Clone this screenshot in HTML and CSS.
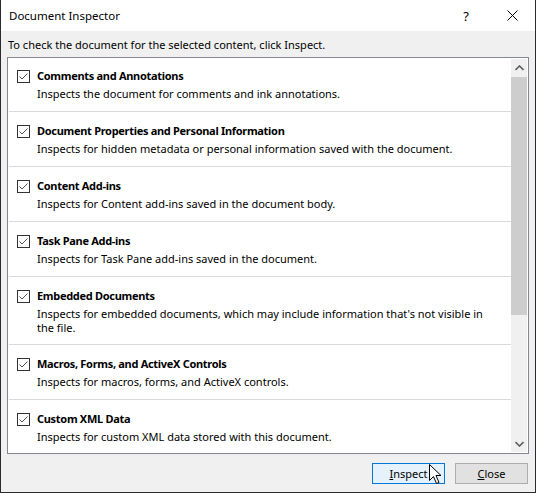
FILE: index.html
```html
<!DOCTYPE html>
<html>
<head>
<meta charset="utf-8">
<link rel="stylesheet" href="styles.css">
</head>
<body>
<div class="window">
  <div class="titlebar">
    <div class="title">Document Inspector</div>
    <div class="tb-btn help">?</div>
    <div class="tb-btn close">
      <svg width="11" height="11" viewBox="0 0 11 11"><path d="M0.5 0.5 L10.5 10.5 M10.5 0.5 L0.5 10.5" stroke="#000" stroke-width="1" fill="none"/></svg>
    </div>
  </div>
  <div class="content">
    <div class="intro">To check the document for the selected content, click Inspect.</div>
    <div class="listbox">
      <div class="items">
        <div class="item">
          <div class="item-head"><span class="check"><svg width="13" height="13" viewBox="0 0 13 13"><rect x="0.5" y="0.5" width="12" height="12" fill="#fff" stroke="#333"/><path d="M2.5 6.5 L5 9 L10.5 3.5" stroke="#555" stroke-width="1" fill="none"/></svg></span><span class="item-title">Comments and Annotations</span></div>
          <div class="item-desc">Inspects the document for comments and ink annotations.</div>
        </div>
        <div class="item">
          <div class="item-head"><span class="check"><svg width="13" height="13" viewBox="0 0 13 13"><rect x="0.5" y="0.5" width="12" height="12" fill="#fff" stroke="#333"/><path d="M2.5 6.5 L5 9 L10.5 3.5" stroke="#555" stroke-width="1" fill="none"/></svg></span><span class="item-title">Document Properties and Personal Information</span></div>
          <div class="item-desc">Inspects for hidden metadata or personal information saved with the document.</div>
        </div>
        <div class="item">
          <div class="item-head"><span class="check"><svg width="13" height="13" viewBox="0 0 13 13"><rect x="0.5" y="0.5" width="12" height="12" fill="#fff" stroke="#333"/><path d="M2.5 6.5 L5 9 L10.5 3.5" stroke="#555" stroke-width="1" fill="none"/></svg></span><span class="item-title">Content Add-ins</span></div>
          <div class="item-desc">Inspects for Content add-ins saved in the document body.</div>
        </div>
        <div class="item">
          <div class="item-head"><span class="check"><svg width="13" height="13" viewBox="0 0 13 13"><rect x="0.5" y="0.5" width="12" height="12" fill="#fff" stroke="#333"/><path d="M2.5 6.5 L5 9 L10.5 3.5" stroke="#555" stroke-width="1" fill="none"/></svg></span><span class="item-title">Task Pane Add-ins</span></div>
          <div class="item-desc">Inspects for Task Pane add-ins saved in the document.</div>
        </div>
        <div class="item">
          <div class="item-head"><span class="check"><svg width="13" height="13" viewBox="0 0 13 13"><rect x="0.5" y="0.5" width="12" height="12" fill="#fff" stroke="#333"/><path d="M2.5 6.5 L5 9 L10.5 3.5" stroke="#555" stroke-width="1" fill="none"/></svg></span><span class="item-title">Embedded Documents</span></div>
          <div class="item-desc multi">Inspects for embedded documents, which may include information that's not visible in<br>the file.</div>
        </div>
        <div class="item">
          <div class="item-head"><span class="check"><svg width="13" height="13" viewBox="0 0 13 13"><rect x="0.5" y="0.5" width="12" height="12" fill="#fff" stroke="#333"/><path d="M2.5 6.5 L5 9 L10.5 3.5" stroke="#555" stroke-width="1" fill="none"/></svg></span><span class="item-title">Macros, Forms, and ActiveX Controls</span></div>
          <div class="item-desc">Inspects for macros, forms, and ActiveX controls.</div>
        </div>
        <div class="item">
          <div class="item-head"><span class="check"><svg width="13" height="13" viewBox="0 0 13 13"><rect x="0.5" y="0.5" width="12" height="12" fill="#fff" stroke="#333"/><path d="M2.5 6.5 L5 9 L10.5 3.5" stroke="#555" stroke-width="1" fill="none"/></svg></span><span class="item-title">Custom XML Data</span></div>
          <div class="item-desc">Inspects for custom XML data stored with this document.</div>
        </div>
      </div>
      <div class="scrollbar">
        <div class="sb-arrow"><svg width="9" height="6" viewBox="0 0 9 6"><path d="M0.5 5 L4.5 1 L8.5 5" stroke="#606060" stroke-width="1.6" fill="none"/></svg></div>
        <div class="sb-track"><div class="sb-thumb"></div></div>
        <div class="sb-arrow"><svg width="9" height="6" viewBox="0 0 9 6"><path d="M0.5 1 L4.5 5 L8.5 1" stroke="#606060" stroke-width="1.6" fill="none"/></svg></div>
      </div>
    </div>
    <div class="buttons">
      <div class="btn default"><span class="ak">I</span>nspect
        <svg class="cursor" width="14" height="22" viewBox="0 0 14 22"><path d="M0.5 0.5 L0.5 16.5 L4.5 12.5 L7.5 19.5 L10 18.5 L7 11.5 L12 11.5 Z" fill="#fff" stroke="#000" stroke-width="1"/></svg>
      </div>
      <div class="btn"><span class="ak">C</span>lose</div>
    </div>
  </div>
</div>
</body>
</html>
```

FILE: styles.css
```css
html, body {
  margin: 0;
  padding: 0;
}
body {
  width: 536px;
  height: 493px;
  overflow: hidden;
  font-family: "Noto Sans", "Open Sans", sans-serif;
  font-size: 11px;
  color: #000;
}
.window {
  box-sizing: border-box;
  width: 536px;
  height: 493px;
  border-left: 1px solid #2b2b2b;
  border-right: 1px solid #2b2b2b;
  border-bottom: 1px solid #2b2b2b;
  background: #f0f0f0;
  display: flex;
  flex-direction: column;
}
.titlebar {
  height: 31px;
  background: #fff;
  display: flex;
  align-items: center;
  flex-shrink: 0;
}
.title {
  flex: 1;
  padding-left: 8px;
  line-height: 16px;
  font-size: 11.5px;
}
.tb-btn {
  width: 46px;
  height: 31px;
  display: flex;
  align-items: center;
  justify-content: center;
}
.help {
  font-size: 13px;
}
.content {
  flex: 1;
  display: flex;
  flex-direction: column;
  padding: 6px 6px 0 6px;
}
.intro {
  line-height: 16px;
  padding-left: 1px;
  margin-bottom: 4px;
}
.listbox {
  height: 397px;
  box-sizing: border-box;
  border: 1px solid #828790;
  background: #fff;
  display: flex;
}
.items {
  flex: 1;
  padding-left: 1px;
}
.item {
  padding: 11px 0 10px 0;
  border-bottom: 1px solid #dadada;
}
.item:first-child {
  padding-top: 10px;
}
.item:last-child {
  border-bottom: none;
}
.item-head {
  display: flex;
  align-items: center;
  height: 16px;
}
.check {
  width: 13px;
  height: 13px;
  margin-left: 8px;
  margin-right: 7px;
  display: flex;
}
.item-title {
  font-weight: bold;
  line-height: 16px;
  letter-spacing: -0.3px;
}
.item-desc {
  margin-top: 3px;
  padding-left: 28px;
  line-height: 14px;
}
.item-desc.multi {
  line-height: 13.5px;
}
.scrollbar {
  width: 16px;
  margin: 1px 1px 1px 0;
  background: #f0f0f0;
  display: flex;
  flex-direction: column;
}
.sb-arrow {
  height: 17px;
  display: flex;
  align-items: center;
  justify-content: center;
}
.sb-track {
  flex: 1;
  padding-top: 1px;
}
.sb-thumb {
  height: 238px;
  background: #cdcdcd;
}
.buttons {
  display: flex;
  justify-content: flex-end;
  gap: 10px;
  padding-top: 9px;
  padding-right: 1px;
}
.btn {
  position: relative;
  width: 73px;
  height: 21px;
  box-sizing: border-box;
  border: 1px solid #adadad;
  background: #e1e1e1;
  display: flex;
  align-items: center;
  justify-content: center;
  line-height: 16px;
}
.btn.default {
  border-color: #0078d7;
  background: #e5f1fb;
}
.ak {
  text-decoration: underline;
}
.cursor {
  position: absolute;
  left: 56px;
  top: 0px;
}
```
